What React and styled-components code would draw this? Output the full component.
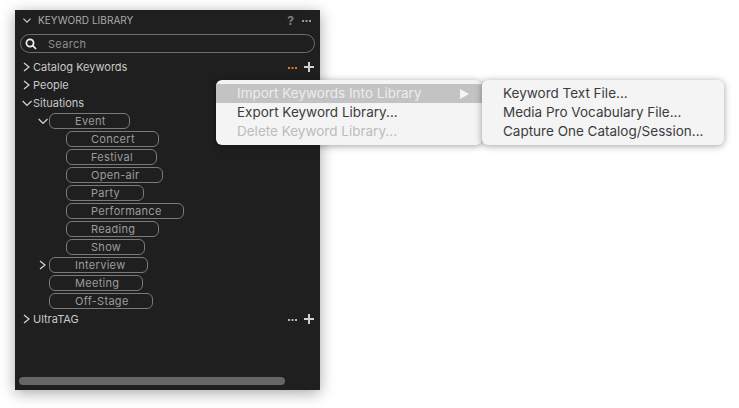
import React from "react";
import styled, { createGlobalStyle } from "styled-components";

const Global = createGlobalStyle`
  html, body { margin: 0; padding: 0; background: #fff; }
  body { font-family: Inter, "Liberation Sans", sans-serif; width: 739px; height: 408px; overflow: hidden; position: relative; }
`;
const Page = styled.div`
  padding: 10px 0 0 15px;
`;
const Panel = styled.section`
  width: 305px;
  height: 380px;
  box-sizing: border-box;
  background: #1f1f1f;
  box-shadow: 0 3px 14px rgba(0,0,0,.35);
  padding: 0 5px;
  display: flex;
  flex-direction: column;
  position: relative;
`;
const Header = styled.header`
  height: 20px;
  display: flex;
  align-items: center;
  padding: 0 4px 0 3px;
  color: #a8a8a8;
  font-size: 10px;
`;
const HeaderChevron = styled.svg`
  width: 8px;
  height: 5px;
  flex: none;
  fill: none;
  stroke: #c8c8c8;
  stroke-width: 1.2;
`;
const HeaderTitle = styled.span`
  margin-left: 7px;
  flex: 1;
  color: #ababab;
  letter-spacing: 0.05px;
`;
const Help = styled.span`
  font-size: 12px;
  font-weight: 700;
  color: #7f7f7f;
  margin-right: 8px;
`;
const SearchBox = styled.div`
  margin-top: 4px;
  height: 19px;
  box-sizing: border-box;
  border: 1px solid #6e6e6e;
  border-radius: 9.5px;
  display: flex;
  align-items: center;
  padding-left: 4px;
  gap: 11px;
  color: #8f8f8f;
  font-size: 11px;
  letter-spacing: 0.3px;
`;
const Tree = styled.div`
  margin-top: 5px;
  display: flex;
  flex-direction: column;
`;
const Row = styled.div`
  height: 18px;
  display: flex;
  align-items: center;
  padding-left: ${p => p.$indent || 0}px;
  color: ${p => p.$bright ? "#c9c9c9" : "#b4b4b4"};
  font-size: 11px;
`;
const Arrow = styled.svg`
  width: 12px;
  height: 10px;
  flex: none;
  margin-right: 1px;
  fill: none;
  stroke: #d8d8d8;
  stroke-width: 1.2;
`;
const RowLabel = styled.span`
  flex: 1;
`;
const Actions = styled.div`
  display: flex;
  align-items: center;
  gap: 7px;
  padding-right: 1px;
`;
const Tag = styled.span`
  box-sizing: border-box;
  height: 16px;
  width: ${p => p.$w}px;
  border: 1px solid #7a7a7a;
  border-radius: 6px;
  padding-left: ${p => p.$pad}px;
  line-height: 14px;
  color: #9c9c9c;
  font-size: 11px;
  letter-spacing: 0.3px;
`;
const Scrollbar = styled.div`
  position: absolute;
  left: 4px;
  bottom: 5px;
  width: 266px;
  height: 8px;
  border-radius: 4px;
  background: #666;
`;
const Menu = styled.div`
  position: absolute;
  top: ${p => p.$top}px;
  left: ${p => p.$left}px;
  width: ${p => p.$w}px;
  height: 65px;
  box-sizing: border-box;
  padding-top: 4px;
  background: #f4f4f4;
  border-radius: 6px;
  box-shadow: 0 1px 7px rgba(0,0,0,.38);
  font-size: 13.5px;
`;
const Item = styled.div`
  height: 19px;
  line-height: 19px;
  display: flex;
  align-items: center;
  padding-left: ${p => p.$pad}px;
  color: ${p => p.$disabled ? "#bcbcbc" : p.$hot ? "#e8edf2" : "#3c3c3c"};
  background: ${p => p.$hot ? "#c3c3c3" : "transparent"};
`;
const ItemLabel = styled.span`
  flex: 1;
`;
const SubArrow = styled.svg`
  width: 9px;
  height: 10px;
  margin-right: 13px;
  fill: #f4f4f4;
`;

const Chev = ({ open }) => (
  <Arrow viewBox="0 0 12 10">
    <path d={open ? "M2.7 3 7 7.5 11.5 3" : "M4 1 9 5 4 9"} />
  </Arrow>
);
const Dots = ({ color }) => (
  <svg width="9" height="3" viewBox="0 0 9 3" fill={color}>
    <rect x="0" y="1" width="2" height="2" /><rect x="3.5" y="1" width="2" height="2" /><rect x="7" y="1" width="2" height="2" />
  </svg>
);
const Plus = () => (
  <svg width="10" height="10" viewBox="0 0 10 10" fill="#d0d0d0">
    <rect x="4" y="0" width="2" height="10" /><rect x="0" y="4" width="10" height="2" />
  </svg>
);

const kids = [
  ["Concert", 93], ["Festival", 91], ["Open-air", 97], ["Party", 78],
  ["Performance", 118], ["Reading", 93], ["Show", 79],
];

export default function App() {
  return (
    <Page>
      <Global />
      <Panel>
        <Header>
          <HeaderChevron viewBox="0 0 8 5"><path d="M.4 .6 4 4.2 7.6 .6" /></HeaderChevron>
          <HeaderTitle>KEYWORD LIBRARY</HeaderTitle>
          <Help>?</Help>
          <Dots color="#9a9a9a" />
        </Header>
        <SearchBox>
          <svg width="12" height="12" viewBox="0 0 12 12" fill="none" stroke="#f0f0f0" strokeWidth="1.7">
            <circle cx="5" cy="5" r="3.6" /><path d="M7.7 7.7 11 11" />
          </svg>
          Search
        </SearchBox>
        <Tree>
          <Row $bright>
            <Chev />
            <RowLabel>Catalog Keywords</RowLabel>
            <Actions><Dots color="#d9792b" /><Plus /></Actions>
          </Row>
          <Row $bright><Chev /><RowLabel>People</RowLabel></Row>
          <Row $bright><Chev open /><RowLabel>Situations</RowLabel></Row>
          <Row $indent={16}>
            <Chev open />
            <Tag $w={81} $pad={25}>Event</Tag>
          </Row>
          {kids.map(([name, w]) => (
            <Row key={name} $indent={46}><Tag $w={w} $pad={24}>{name}</Tag></Row>
          ))}
          <Row $indent={16}>
            <Chev />
            <Tag $w={99} $pad={25}>Interview</Tag>
          </Row>
          <Row $indent={29}><Tag $w={94} $pad={25}>Meeting</Tag></Row>
          <Row $indent={29}><Tag $w={104} $pad={25}>Off-Stage</Tag></Row>
          <Row $bright>
            <Chev />
            <RowLabel>UltraTAG</RowLabel>
            <Actions><Dots color="#b5b5b5" /><Plus /></Actions>
          </Row>
        </Tree>
        <Scrollbar />
      </Panel>
      <Menu $top={80} $left={216} $w={266}>
        <Item $hot $pad={21}>
          <ItemLabel>Import Keywords Into Library</ItemLabel>
          <SubArrow viewBox="0 0 9 10"><path d="M0 0 9 5 0 10Z" /></SubArrow>
        </Item>
        <Item $pad={21}>Export Keyword Library...</Item>
        <Item $disabled $pad={21}>Delete Keyword Library...</Item>
      </Menu>
      <Menu $top={80} $left={482} $w={242}>
        <Item $pad={21}>Keyword Text File...</Item>
        <Item $pad={21}>Media Pro Vocabulary File...</Item>
        <Item $pad={21}>Capture One Catalog/Session...</Item>
      </Menu>
    </Page>
  );
}
